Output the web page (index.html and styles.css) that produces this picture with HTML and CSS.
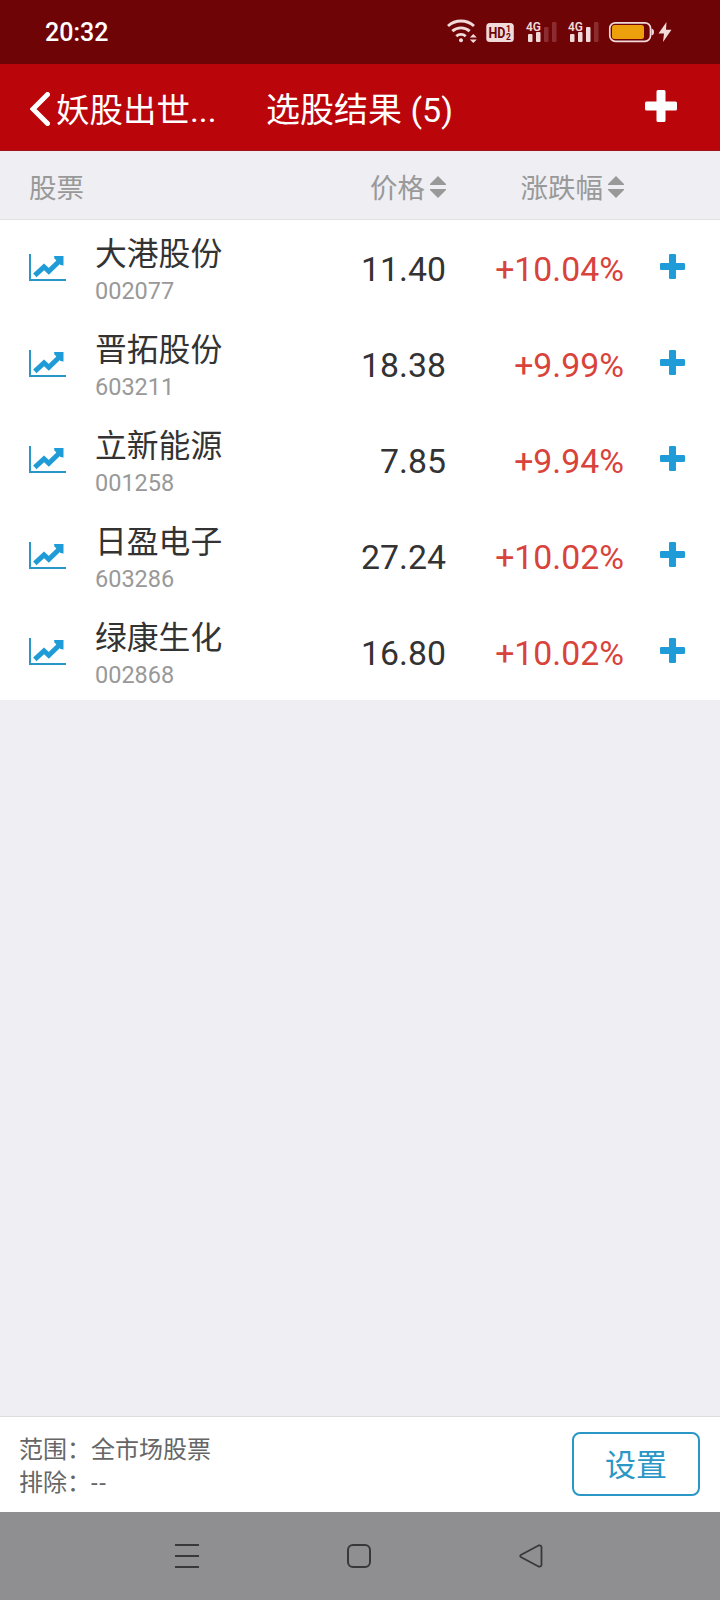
FILE: index.html
```html
<!DOCTYPE html>
<html lang="zh-CN">
<head>
<meta charset="utf-8">
<title>选股结果</title>
<link rel="stylesheet" href="styles.css">
</head>
<body>
<svg class="defs" aria-hidden="true">
  <symbol id="chart" viewBox="0 0 37 28">
    <path d="M1 0V26H37" fill="none" stroke="#2b97c6" stroke-width="2"/>
    <path d="M5.800 21.300L15 12.800L19.800 17.300L31 6.500" fill="none" stroke="#1f9bd7" stroke-width="5"/>
    <path d="M25 2H34.500V11.500L31.500 11L25.500 4.500Z" fill="#1f9bd7"/>
  </symbol>
  <symbol id="plus" viewBox="0 0 32 32">
    <path d="M13 0H19Q20.500 0 20.500 1.500V11.500H30.500Q32 11.500 32 13V19Q32 20.500 30.500 20.500H20.500V30.500Q20.500 32 19 32H13Q11.500 32 11.500 30.500V20.500H1.500Q0 20.500 0 19V13Q0 11.500 1.500 11.500H11.500V1.500Q11.500 0 13 0Z" fill="currentColor"/>
  </symbol>
  <symbol id="sort" viewBox="0 0 16 22">
    <path d="M8 0L16 8V9H0V8ZM0 13H16V14L8 22L0 14Z" fill="#999"/>
  </symbol>
</svg>
<div class="screen">
  <div class="status">
    <span class="time">20:32</span>
    <svg class="status-icons" width="260" height="64" viewBox="0 0 260 64">
      <g fill="none" stroke="#f0dada" stroke-width="2.900">
        <path d="M18 26A19.500 19.500 0 0 1 44 26"/>
        <path d="M22.300 31.200A13 13 0 0 1 39.700 31.200"/>
        <path d="M26.300 36.200A7 7 0 0 1 35.700 36.200"/>
      </g>
      <g fill="#f0dada">
        <circle cx="31" cy="40.200" r="2"/>
        <path d="M43.300 34L46.800 37.600H39.800ZM39.800 39.400H46.800L43.300 43Z"/>
        <rect x="56.300" y="23" width="27.500" height="19" rx="3.500"/>
        <rect x="98" y="34" width="4.500" height="8" rx="1"/>
        <rect x="106" y="32" width="4.500" height="10" rx="1"/>
        <rect x="140" y="34" width="4.500" height="8" rx="1"/>
        <rect x="148" y="32" width="4.500" height="10" rx="1"/>
        <rect x="156" y="27" width="4.500" height="15" rx="1"/>
        <path d="M236.500 22L228.500 33.500H234L233 42L241.500 29.800H236Z"/>
        <path d="M221.500 28.500Q224 29 224 32T221.500 35.500Z"/>
      </g>
      <g fill="#8b2c30">
        <rect x="114" y="27" width="4.500" height="15" rx="1"/>
        <rect x="122" y="22" width="4.500" height="20" rx="1"/>
        <rect x="164" y="22" width="4.500" height="20" rx="1"/>
      </g>
      <g class="net">
        <text x="96" y="31" textLength="15" lengthAdjust="spacingAndGlyphs">4G</text>
        <text x="138" y="31" textLength="15" lengthAdjust="spacingAndGlyphs">4G</text>
      </g>
      <text class="hd" x="58.500" y="38" textLength="17" lengthAdjust="spacingAndGlyphs">HD</text>
      <text class="hd-sub" x="76" y="31.700">1</text>
      <text class="hd-sub" x="76" y="40.200">2</text>
      <rect x="179.800" y="22.800" width="40.700" height="18.500" rx="5.500" fill="none" stroke="#f0dada" stroke-width="1.700"/>
      <rect x="182" y="25" width="32" height="14" rx="2.500" fill="#eca00c"/>
    </svg>
  </div>
  <header class="header">
    <div class="back">
      <svg width="20" height="34" viewBox="0 0 20 34"><path d="M17.500 2.500L3 17L17.500 31.500" fill="none" stroke="#fff" stroke-width="5" stroke-linecap="round"/></svg>
      <span>妖股出世...</span>
    </div>
    <h1 class="title">选股结果 (5)</h1>
    <svg class="add" width="32" height="32"><use href="#plus"/></svg>
  </header>
  <div class="columns">
    <span>股票</span>
    <span class="sortable">价格<svg width="16" height="22"><use href="#sort"/></svg></span>
    <span class="sortable">涨跌幅<svg width="16" height="22"><use href="#sort"/></svg></span>
  </div>
  <main class="list">
    <div class="row"><svg class="chart" width="37" height="28"><use href="#chart"/></svg><div class="stock"><div class="name">大港股份</div><div class="code">002077</div></div><div class="num">11.40</div><div class="num up">+10.04%</div><svg class="plus" width="25" height="25"><use href="#plus"/></svg></div>
    <div class="row"><svg class="chart" width="37" height="28"><use href="#chart"/></svg><div class="stock"><div class="name">晋拓股份</div><div class="code">603211</div></div><div class="num">18.38</div><div class="num up">+9.99%</div><svg class="plus" width="25" height="25"><use href="#plus"/></svg></div>
    <div class="row"><svg class="chart" width="37" height="28"><use href="#chart"/></svg><div class="stock"><div class="name">立新能源</div><div class="code">001258</div></div><div class="num">7.85</div><div class="num up">+9.94%</div><svg class="plus" width="25" height="25"><use href="#plus"/></svg></div>
    <div class="row"><svg class="chart" width="37" height="28"><use href="#chart"/></svg><div class="stock"><div class="name">日盈电子</div><div class="code">603286</div></div><div class="num">27.24</div><div class="num up">+10.02%</div><svg class="plus" width="25" height="25"><use href="#plus"/></svg></div>
    <div class="row"><svg class="chart" width="37" height="28"><use href="#chart"/></svg><div class="stock"><div class="name">绿康生化</div><div class="code">002868</div></div><div class="num">16.80</div><div class="num up">+10.02%</div><svg class="plus" width="25" height="25"><use href="#plus"/></svg></div>
  </main>
  <footer class="footer">
    <div class="scope"><div>范围：全市场股票</div><div>排除：<span class="dashes">--</span></div></div>
    <button class="settings">设置</button>
  </footer>
  <nav class="nav">
    <svg width="24" height="26" viewBox="0 0 24 26"><path d="M0 2H24M0 13H24M0 24H24" stroke="#38383a" stroke-width="2"/></svg>
    <svg width="24" height="24" viewBox="0 0 24 24"><rect x="1" y="1" width="22" height="22" rx="5" fill="none" stroke="#38383a" stroke-width="2"/></svg>
    <svg width="24" height="24" viewBox="0 0 24 24"><path d="M2.200 10.700L19.500 1.500Q22.500 .8 22.500 3.500V20.500Q22.500 23.200 19.500 22.500L2.200 13.300Q.2 12 2.200 10.700Z" fill="none" stroke="#38383a" stroke-width="1.800"/></svg>
  </nav>
</div>
</body>
</html>
```

FILE: styles.css
```css
* { box-sizing: border-box; }
body { margin: 0; font-family: Roboto, "Noto Sans CJK SC", sans-serif; }
svg { display: block; flex: none; }
.defs { display: none; }
.screen { width: 720px; height: 1600px; display: flex; flex-direction: column; background: #eeeef3; }
.status { height: 64px; background: #6f0407; display: flex; justify-content: space-between; padding: 0 30px 0 45px; }
.time { color: #fff; font-size: 25px; font-weight: 500; line-height: 66px; }
.net { fill: #f0dada; font-size: 13.500px; font-weight: 600; }
.hd { fill: #6f0407; font-size: 14.500px; font-weight: 700; }
.hd-sub { fill: #6f0407; font-size: 8.500px; font-weight: 700; line-height: 1; }
.header { height: 87px; background: #ba050b; border-bottom: 1px solid #a01318; color: #fff; display: grid; grid-template-columns: 236px 379px 32px; padding-left: 30px; font-size: 33.500px; }
.back { display: flex; padding-top: 26px; gap: 6px; white-space: nowrap; }
.back svg { margin-top: 2px; }
.back span { line-height: 41px; }
.title { margin: 0; padding-top: 24px; font-size: 34px; font-weight: 400; line-height: 45px; }
.add { margin-top: 26px; }
.columns { height: 69px; border-bottom: 1px solid #e1e1e4; display: grid; grid-template-columns: 200px 217px 178px; padding-left: 29px; color: #999; font-size: 27.500px; line-height: 76px; }
.sortable { display: flex; justify-content: flex-end; gap: 5px; }
.sortable svg { margin-top: 25px; }
.list { background: #fff; }
.row { height: 96px; display: grid; grid-template-columns: 66px 200px 151px 178px 36px 25px; padding-left: 29px; }
.chart { margin-top: 34px; }
.stock { padding-top: 14px; }
.name { font-size: 31.800px; line-height: 40px; color: #333; }
.code { font-size: 23.500px; line-height: 28px; margin-top: 3px; color: #999; }
.num { font-size: 33.800px; line-height: 99px; text-align: right; color: #333; }
.up { color: #d8433c; }
.plus { margin-top: 34px; color: #1f9bd7; grid-column: 6; }
.footer { margin-top: auto; height: 96px; background: #fff; border-top: 1px solid #dcdcde; display: flex; justify-content: space-between; padding: 15px 20px 0 19px; }
.scope { color: #666; font-size: 24px; line-height: 33px; padding-top: 2px; }
.dashes { letter-spacing: 1.500px; }
.settings { width: 128px; height: 64px; border: 2px solid #2b97c6; border-radius: 8px; background: #fff; color: #2b97c6; font: 31px/60px Roboto, "Noto Sans CJK SC", sans-serif; padding: 2px 0 0; }
.nav { height: 88px; background: #8f8f91; display: flex; align-items: center; gap: 148px; padding-left: 175px; }
```
